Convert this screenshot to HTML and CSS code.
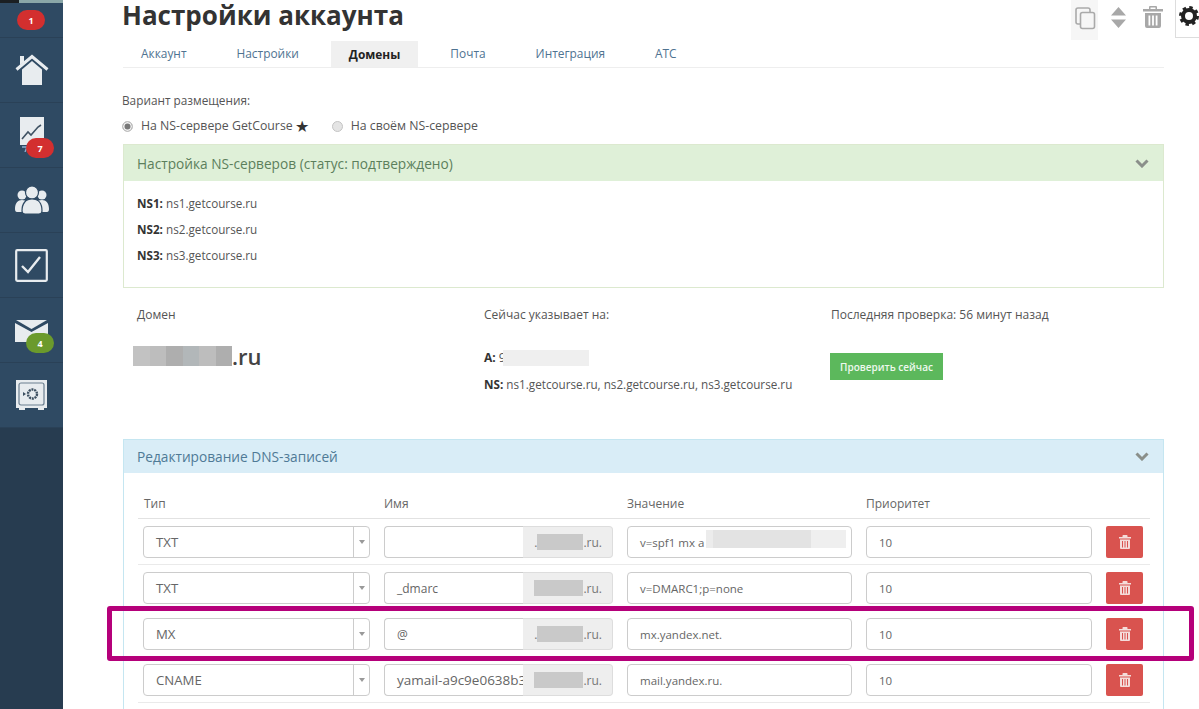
FILE: index.html
```html
<!DOCTYPE html>
<html lang="ru">
<head>
<meta charset="utf-8">
<title>Настройки аккаунта</title>
<link rel="stylesheet" href="styles.css">
</head>
<body>
<div class="page">
  <nav class="sidebar">
    <div class="avatar-strip"></div>
    <a class="nav-item nav-first"><span class="badge badge-first">1</span></a>
    <a class="nav-item">
      <svg class="nav-icon" width="34" height="32" viewBox="0 0 34 32"><path class="fill" d="M7 15.5 17 7l10 8.5V31H7z"/><path class="line" d="M1.5 15.5 17 2.5l15.5 13" /><path class="fill" d="M5 2h4v6l-4 3z"/></svg>
    </a>
    <a class="nav-item">
      <svg class="nav-icon nav-chart" width="26" height="36" viewBox="0 0 26 36"><path class="fill" d="M1 1h24v28H1z"/><path class="dark" d="M3 23l6-7 3 3 7-8 3-2"/><path class="pale" d="M3 31h9M8 31l-2 5"/></svg>
      <span class="badge badge-chart">7</span>
    </a>
    <a class="nav-item">
      <svg class="nav-icon" width="34" height="30" viewBox="0 0 34 30"><circle class="fill" cx="7" cy="10" r="4.5"/><circle class="fill" cx="27" cy="10" r="4.5"/><path class="fill" d="M0 24c0-6 3-9 7-9s7 3 7 9v3H2q-2 0-2-3zM20 18c2-2 4-3 7-3 4 0 7 3 7 9q0 3-2 3H20z"/><circle class="edge" cx="17" cy="7.500" r="6.500"/><path class="edge" d="M7 26c0-8 4-12 10-12s10 4 10 12q0 3-3 3H10q-3 0-3-3z"/></svg>
    </a>
    <a class="nav-item">
      <svg class="nav-icon" width="33" height="33" viewBox="0 0 33 33"><rect class="frame" x="1.200" y="1.200" width="30.600" height="30.600" rx="1"/><path class="tick" d="M7 17l6 6L25 8"/></svg>
    </a>
    <a class="nav-item">
      <svg class="nav-icon nav-mail" width="33" height="22" viewBox="0 0 33 22"><path class="fill" d="M0 3l16.500 9L33 3v19H0z"/><path class="fill" d="M1 0h31L16.500 9z"/></svg>
      <span class="badge badge-mail">4</span>
    </a>
    <a class="nav-item">
      <svg class="nav-icon" width="33" height="33" viewBox="0 0 33 33"><path class="fill" d="M1 1h31v28H1zM4 29h6v2H4zM23 29h6v2h-6z"/><rect class="safe-door" x="4" y="4" width="25" height="22" rx="2"/><circle class="safe-dial" cx="17.500" cy="15" r="4.500"/><path class="safe-mark" d="M8 13v4l3-2z"/></svg>
    </a>
  </nav>

  <main class="main">
    <header class="topbar">
      <h1 class="title">Настройки аккаунта</h1>
      <div class="tools">
        <span class="tool tool-copy">
          <svg width="21" height="23" viewBox="0 0 21 23"><path class="tool-line" d="M5 17H3q-2 0-2-2V3q0-2 2-2h10q2 0 2 2v2"/><rect class="tool-line" x="5.500" y="5.500" width="14" height="16" rx="2"/></svg>
        </span>
        <span class="tool tool-sort">
          <svg width="15" height="21" viewBox="0 0 15 21"><path class="tool-fill" d="M7.500 0 15 8.500H0zM0 12.500h15L7.500 21z"/></svg>
        </span>
        <span class="tool tool-trash">
          <svg width="20" height="22" viewBox="0 0 20 22"><path class="tool-fill" d="M0 3h6V1q0-1 1-1h6q1 0 1 1v2h6v2.500H0zM7.500 1.500V3h5V1.500zM2 7h16v13q0 2-2 2H4q-2 0-2-2zM5.500 9.500v10h1.800v-10zM9.100 9.500v10h1.800v-10zM12.700 9.500v10h1.800v-10z" fill-rule="evenodd"/></svg>
        </span>
        <span class="tool tool-gear">
          <svg width="20" height="20" viewBox="0 0 20 20"><circle class="gear-ring" cx="10" cy="10" r="6"/><circle class="gear-teeth" cx="10" cy="10" r="8.300"/></svg>
        </span>
      </div>
    </header>

    <div class="content">
      <ul class="tabs">
        <li class="tab">Аккаунт</li>
        <li class="tab">Настройки</li>
        <li class="tab tab-active">Домены</li>
        <li class="tab">Почта</li>
        <li class="tab">Интеграция</li>
        <li class="tab">АТС</li>
      </ul>

      <p class="placement-label">Вариант размещения:</p>
      <div class="radios">
        <span class="radio-item"><span class="radio radio-on"></span>На NS-сервере GetCourse<span class="star">★</span></span>
        <span class="radio-item"><span class="radio"></span>На своём NS-сервере</span>
      </div>

      <section class="panel panel-green">
        <div class="panel-head">Настройка NS-серверов (статус: подтверждено)<svg class="chevron" width="14" height="9" viewBox="0 0 14 9"><path d="M1.500 1.500 7 7l5.500-5.500"/></svg></div>
        <div class="panel-body ns-list">
          <p><b>NS1:</b> ns1.getcourse.ru</p>
          <p><b>NS2:</b> ns2.getcourse.ru</p>
          <p><b>NS3:</b> ns3.getcourse.ru</p>
        </div>
      </section>

      <section class="domain-info">
        <div class="domain-col">
          <p class="domain-label">Домен</p>
          <div class="domain-name"><span class="mosaic"><i class="m1"></i><i class="m2"></i><i class="m3"></i><i class="m4"></i><i class="m2"></i><i class="m3"></i></span>.ru</div>
        </div>
        <div class="domain-col">
          <p class="domain-label">Сейчас указывает на:</p>
          <p class="record-a"><b>A:</b> 9<span class="mask-a"></span></p>
          <p class="record-ns"><b>NS:</b> ns1.getcourse.ru, ns2.getcourse.ru, ns3.getcourse.ru</p>
        </div>
        <div class="domain-col">
          <p class="domain-label">Последняя проверка: 56 минут назад</p>
          <span class="check-btn">Проверить сейчас</span>
        </div>
      </section>

      <section class="panel panel-blue">
        <div class="panel-head">Редактирование DNS-записей<svg class="chevron" width="14" height="9" viewBox="0 0 14 9"><path d="M1.500 1.500 7 7l5.500-5.500"/></svg></div>
        <div class="panel-body dns">
          <div class="dns-row dns-header"><span>Тип</span><span>Имя</span><span>Значение</span><span>Приоритет</span><span></span></div>

          <div class="dns-row">
            <div class="select">TXT<span class="select-arrow"></span></div>
            <div class="name-group"><span class="name-input"></span><span class="addon">.<span class="addon-mask mask-1"></span>.ru.</span></div>
            <div class="field field-spf">v=spf1 mx a<span class="value-mask"></span></div>
            <div class="field">10</div>
            <span class="del"><svg width="12" height="14" viewBox="0 0 12 14"><path class="del-icon" d="M0 2h3.500V.8Q3.500 0 4.300 0h3.400q.8 0 .8.800V2H12v1.500H0zM1 4.500h10V13q0 1-1 1H2q-1 0-1-1zM3 6v6.500h1V6zM5.500 6v6.500h1V6zM8 6v6.500h1V6z" fill-rule="evenodd"/></svg></span>
          </div>

          <div class="dns-row">
            <div class="select">TXT<span class="select-arrow"></span></div>
            <div class="name-group"><span class="name-input">_dmarc</span><span class="addon"><span class="addon-mask mask-2"></span>.ru.</span></div>
            <div class="field">v=DMARC1;p=none</div>
            <div class="field">10</div>
            <span class="del"><svg width="12" height="14" viewBox="0 0 12 14"><path class="del-icon" d="M0 2h3.500V.8Q3.500 0 4.300 0h3.400q.8 0 .8.800V2H12v1.500H0zM1 4.500h10V13q0 1-1 1H2q-1 0-1-1zM3 6v6.500h1V6zM5.500 6v6.500h1V6zM8 6v6.500h1V6z" fill-rule="evenodd"/></svg></span>
          </div>

          <div class="dns-row">
            <div class="select">MX<span class="select-arrow"></span></div>
            <div class="name-group"><span class="name-input">@</span><span class="addon">.<span class="addon-mask mask-1"></span>.ru.</span></div>
            <div class="field">mx.yandex.net.</div>
            <div class="field">10</div>
            <span class="del"><svg width="12" height="14" viewBox="0 0 12 14"><path class="del-icon" d="M0 2h3.500V.8Q3.500 0 4.300 0h3.400q.8 0 .8.800V2H12v1.500H0zM1 4.500h10V13q0 1-1 1H2q-1 0-1-1zM3 6v6.500h1V6zM5.500 6v6.500h1V6zM8 6v6.500h1V6z" fill-rule="evenodd"/></svg></span>
          </div>

          <div class="dns-row">
            <div class="select">CNAME<span class="select-arrow"></span></div>
            <div class="name-group"><span class="name-input name-long">yamail-a9c9e0638b3</span><span class="addon"><span class="addon-mask mask-2"></span>.ru.</span></div>
            <div class="field">mail.yandex.ru.</div>
            <div class="field">10</div>
            <span class="del"><svg width="12" height="14" viewBox="0 0 12 14"><path class="del-icon" d="M0 2h3.500V.8Q3.500 0 4.300 0h3.400q.8 0 .8.800V2H12v1.500H0zM1 4.500h10V13q0 1-1 1H2q-1 0-1-1zM3 6v6.500h1V6zM5.500 6v6.500h1V6zM8 6v6.500h1V6z" fill-rule="evenodd"/></svg></span>
          </div>
        </div>
      </section>
    </div>
  </main>
</div>
<div class="highlight"></div>
</body>
</html>
```

FILE: styles.css
```css
* { box-sizing: border-box; }
html, body { margin: 0; height: 100%; overflow: hidden; background: #fff; }
body { font-family: "Open Sans", "Noto Sans", sans-serif; font-size: 12px; color: #555; position: relative; }
p { margin: 0; }
b { color: #333; font-weight: 700; }

.page { display: flex; height: 709px; overflow: hidden; }

/* Sidebar */
.sidebar { width: 63px; flex: none; background: #273c50; display: flex; flex-direction: column; }
.avatar-strip { height: 3px; background: linear-gradient(90deg, #1b1f22 0 30%, #8aa7a8 30% 100%); }
.nav-item { position: relative; height: 65px; flex: none; display: flex; align-items: center; justify-content: center; background: #2f4a63; border-bottom: 1px solid #2a4157; }
.nav-first { height: 35px; }
.nav-icon { display: block; }
.nav-chart { margin-top: -2px; }
.nav-mail { margin-top: 1px; }
.fill { fill: #e8ecef; }
.line { fill: none; stroke: #e8ecef; stroke-width: 3; }
.dark { fill: none; stroke: #3f5263; stroke-width: 1.6; }
.pale { fill: none; stroke: #8fb0d0; stroke-width: 1.4; }
.edge { fill: #e8ecef; stroke: #2f4a63; stroke-width: 1.2; }
.frame { fill: none; stroke: #e8ecef; stroke-width: 2.200; }
.tick { fill: none; stroke: #e8ecef; stroke-width: 2.400; }
.safe-door { fill: #e8ecef; stroke: #6b7f90; stroke-width: 1.2; }
.safe-dial { fill: none; stroke: #3d4f60; stroke-width: 2.400; stroke-dasharray: 2 .8; }
.safe-mark { fill: #3d4f60; }
.badge { position: absolute; display: flex; align-items: center; justify-content: center; width: 28px; height: 20px; border-radius: 10px; color: #fff; font-size: 9px; font-weight: 700; background: #d32f2f; }
.badge-first { left: 17px; top: 7px; }
.badge-chart { left: 26px; top: 35px; }
.badge-mail { left: 26px; top: 35px; background: #6b9a2c; }

/* Main */
.main { flex: 1; min-width: 0; padding-left: 59px; }
.topbar { display: flex; height: 41px; }
.title { flex: 1; margin: 0; font-size: 26px; line-height: 31px; font-weight: 700; color: #333; }
.tools { display: flex; align-items: flex-start; }
.tool { display: flex; align-items: center; justify-content: center; height: 40px; }
.tool-copy { width: 27px; background: #f6f6f6; }
.tool-copy svg { margin-left: 2px; margin-top: -3px; }
.tool-sort { width: 40px; margin-top: -3px; }
.tool-trash { width: 30px; margin-top: -3px; }
.tool-gear { width: 24px; height: 38px; margin-left: 7px; border-left: 1px solid #ddd; border-bottom: 1px solid #ddd; padding-bottom: 6px; justify-content: flex-start; padding-left: 3px; }
.tool-line { fill: none; stroke: #aaa; stroke-width: 1.6; }
.tool-fill { fill: #a8a8a8; }
.gear-ring { fill: none; stroke: #222; stroke-width: 4; }
.gear-teeth { fill: none; stroke: #222; stroke-width: 3.400; stroke-dasharray: 3.300 3.220; }

.content { margin-right: 35px; padding-left: 1px; }

/* Tabs */
.tabs { display: flex; gap: 14px; list-style: none; margin: 0; padding: 0; height: 27px; border-bottom: 1px solid #eee; }
.tab { padding: 0 18px; line-height: 25px; color: #4f7391; font-size: 11.900px; }
.tab-active { background: #f0f0f0; color: #222; font-weight: 700; line-height: 26px; }

.placement-label { margin: 23px 0 0 -1px; line-height: 18px; font-size: 11.800px; }
.radios { display: flex; gap: 23px; margin: 8px 0 0 -1px; height: 18px; }
.radio-item { display: flex; align-items: center; line-height: 18px; font-size: 12.300px; }
.radio { width: 11px; height: 11px; border: 1px solid #c4c4c4; border-radius: 50%; background: #e4e4e4; margin-right: 8px; }
.radio-on { background: #777; box-shadow: inset 0 0 0 1.500px #f0f0f0; }
.star { color: #333; font-size: 16px; margin-left: 2px; }

/* Panels */
.panel { border: 1px solid; }
.panel-green { margin-top: 9px; height: 144px; border-color: #dce9cf; }
.panel-blue { margin-top: 0; height: 300px; border-color: #c5e6f1; }
.panel-head { display: flex; justify-content: space-between; align-items: center; padding: 0 14px 0 13px; font-size: 13.700px; }
.panel-green .panel-head { height: 36px; background: #dff0d8; color: #5c7f5c; }
.panel-blue .panel-head { height: 33px; background: #d9edf7; color: #4f7a96; }
.chevron path { fill: none; stroke: #8a8f8a; stroke-width: 3; }
.ns-list { padding: 9px 13px 0; font-size: 11.700px; }
.ns-list p { line-height: 26px; }

/* Domain */
.domain-info { display: grid; grid-template-columns: 347px 347px 1fr; padding: 17px 14px 0; height: 151px; }
.domain-label { line-height: 20px; }
.domain-name { display: flex; align-items: center; margin: 19px 0 0 -4px; font-size: 22px; font-weight: 600; color: #444; height: 24px; }
.mosaic { display: flex; height: 20px; width: 99px; }
.mosaic i { flex: 1; }
.m1 { background: #c2c2c2; }
.m2 { background: #bdbdbd; }
.m3 { background: #aeaeae; }
.m4 { background: #b2b7b9; }
.record-a { position: relative; margin-top: 24px; line-height: 18px; }
.mask-a { position: absolute; left: 19px; top: 1px; width: 86px; height: 16px; background: #efefef; }
.record-ns { margin-top: 8px; line-height: 18px; font-size: 11.700px; }
.check-btn { display: flex; align-items: center; justify-content: center; width: 113px; height: 27px; margin: 28px 0 0 -1px; background: #5cb85c; color: #eef8ee; font-size: 10px; font-weight: 600; }

/* DNS */
.dns { padding: 0 13px 0 14px; }
.dns-row { display: grid; grid-template-columns: 227px 229px 225px 226px 37px; column-gap: 14px; padding: 7px 5px 6px; border-bottom: 1px solid #eaeaea; align-items: stretch; }
.dns-row > * { height: 32px; }
.dns-header { padding: 22px 5px 0; height: 46px; border-bottom: 1px solid #e2e2e2; color: #666; }
.dns-header > * { height: auto; line-height: 18px; }
.dns-header > :first-child { padding-left: 1px; }
.select, .field, .name-input { display: flex; align-items: center; border: 1px solid #ccc; background: #fff; color: #666; white-space: nowrap; overflow: hidden; }
.select { position: relative; border-radius: 4px; padding-left: 12px; font-size: 13.200px; }
.select-arrow { position: absolute; right: 0; top: 0; bottom: 0; width: 16px; border-left: 1px solid #ccc; }
.select-arrow::after { content: ""; position: absolute; left: 5px; top: 13px; border: 3px solid transparent; border-top: 4px solid #999; border-bottom: 0; }
.field { position: relative; border-radius: 4px; padding: 0 12px; font-size: 11.500px; }
.value-mask { position: absolute; left: 78px; top: 3px; width: 140px; height: 18px; background: linear-gradient(90deg, #ececec 0 5%, #e3e3e3 5% 75%, #efefef 75% 100%); }
.name-group { display: flex; }
.name-input { flex: none; width: 139px; padding: 0 0 0 12px; border-radius: 4px 0 0 4px; border-right: 0; }
.name-long { font-size: 13.500px; }
.addon { flex: 1; display: flex; align-items: center; justify-content: flex-end; padding: 0 10px; background: #eee; border: 1px solid #ddd; border-left: 0; border-radius: 0 4px 4px 0; color: #777; }
.addon-mask { height: 16px; background: #c9c9c9; }
.mask-1 { width: 46px; }
.mask-2 { width: 49px; }
.del { display: flex; align-items: center; justify-content: center; background: #d9534f; border-radius: 2px; }
.del-icon { fill: #f4dcda; }

/* Highlight frame */
.highlight { position: absolute; left: 107px; top: 606px; width: 1087px; height: 55px; border: 5px solid #b5007a; border-radius: 3px; }
```
